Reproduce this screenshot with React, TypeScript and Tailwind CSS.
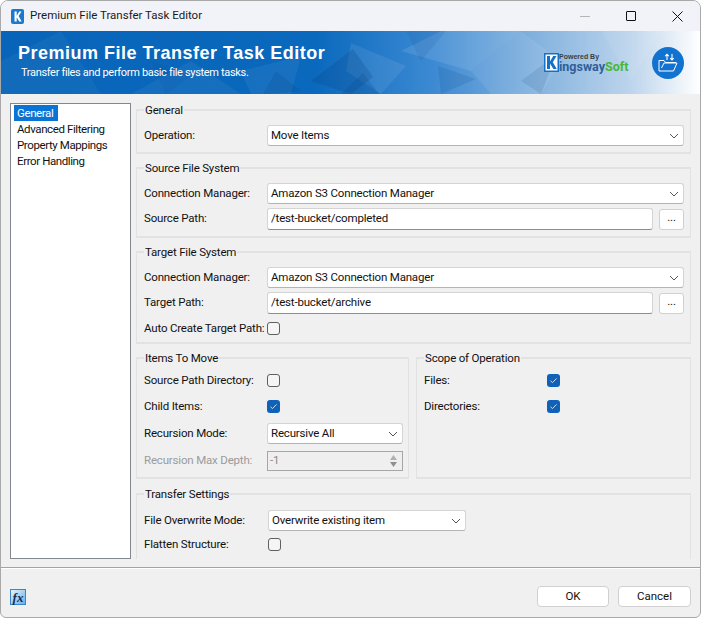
import React from "react";

const font = "font-['Roboto','Liberation_Sans',sans-serif]";

function Chevron() {
  return (
    <svg width="10" height="6" viewBox="0 0 10 6" className="shrink-0">
      <path d="M1 1l4 4 4-4" fill="none" stroke="#555" strokeWidth="1" />
    </svg>
  );
}

function Select({ value, className }: { value: string; className: string }) {
  return (
    <div className={`h-[21px] bg-white rounded-[3px] border border-[#d4d4d4] border-b-[#b4b4b4] flex items-center justify-between pl-[3px] pr-[4px] text-[#111] ${className}`}>
      <span>{value}</span>
      <Chevron />
    </div>
  );
}

function Check({ on = false, className = "" }: { on?: boolean; className?: string }) {
  return on ? (
    <div className={`w-[13px] h-[13px] rounded-[3px] bg-[#0f62b8] flex items-center justify-center shrink-0 ${className}`}>
      <svg width="9" height="7" viewBox="0 0 9 7">
        <path d="M1.5 3.8l2 1.8 4-4.2" fill="none" stroke="#dfe9f5" strokeWidth="0.9" />
      </svg>
    </div>
  ) : (
    <div className={`w-[13px] h-[13px] rounded-[3px] border border-[#5f5f5f] bg-[#f5f5f5] shrink-0 ${className}`} />
  );
}

function Group({ title, className, children }: { title: string; className: string; children: React.ReactNode }) {
  return (
    <fieldset className={`border-2 border-[#e2e2e2] border-x-[1.5px] pl-[7px] shrink-0 ${className}`}>
      <legend className="ml-0 px-[1px] text-[#111] leading-[16px] h-[16px]">{title}</legend>
      {children}
    </fieldset>
  );
}

function Row({ label, className = "", dim = false, children }: { label: string; className?: string; dim?: boolean; children: React.ReactNode }) {
  return (
    <div className={`flex items-center ${className}`}>
      <span className={`w-[123px] shrink-0 whitespace-nowrap ${dim ? "text-[#9b9b9b]" : "text-[#111]"}`}>{label}</span>
      {children}
    </div>
  );
}

function PathInput({ value }: { value: string }) {
  return (
    <div className="flex items-center gap-[6px] flex-1">
      <div className="h-[22px] flex-1 bg-white rounded-[3px] border border-[#d4d4d4] border-b-[#8e8e8e] flex items-center pl-[3px] text-[#111]">{value}</div>
      <div className="w-[25px] h-[21px] bg-white rounded-[3px] border border-[#d0d0d0] flex items-center justify-center text-[#111] leading-none pb-[2px]">...</div>
    </div>
  );
}

function Banner() {
  return (
    <div className="relative h-[63px] shrink-0 overflow-hidden bg-[linear-gradient(90deg,#0864b8_0%,#0a69bd_45%,#3d8ad3_62%,#8ab6e0_78%,#bcd4ec_90%,#ffffff_100%)]">
      <svg className="absolute inset-0" width="701" height="63" viewBox="0 0 701 63">
        <g fill="#ffffff">
          <polygon points="0,30 60,0 100,63 0,63" opacity="0.04" />
          <polygon points="130,63 190,30 240,63" opacity="0.05" />
          <polygon points="240,40 300,25 290,63 250,63" opacity="0.06" />
          <polygon points="350,12 405,35 380,63 345,40" opacity="0.08" />
          <polygon points="400,20 440,0 520,0 470,40" opacity="0.1" />
          <polygon points="470,40 520,0 560,30 540,63 490,63" opacity="0.08" />
          <polygon points="600,0 660,0 630,50" opacity="0.07" />
        </g>
        <g fill="#083f7e">
          <polygon points="340,63 362,42 378,63" opacity="0.18" />
          <polygon points="310,50 352,18 372,46 350,63" opacity="0.22" />
          <polygon points="437,35 475,48 440,63" opacity="0.14" />
          <polygon points="520,50 555,24 540,63" opacity="0.12" />
          <polygon points="275,40 300,60 262,63" opacity="0.16" />
          <polygon points="405,0 445,0 420,30" opacity="0.1" />
          <polygon points="150,30 190,45 165,63" opacity="0.08" />
        </g>
      </svg>
      <div className="relative flex items-center h-full pl-[17px] pr-[16px]">
        <div className="flex-1 min-w-0 flex flex-col">
          <div className="text-white font-bold font-['Liberation_Sans',sans-serif] text-[18px] leading-[22px] tracking-[0.5px] mt-[-2px]">Premium File Transfer Task Editor</div>
          <div className="text-white text-[11px] tracking-[-0.33px] leading-[16px] ml-[3px] mt-[1px]">Transfer files and perform basic file system tasks.</div>
        </div>
        <div className="flex items-center mr-[22px] relative h-[20px] w-[86px] tracking-normal">
          <svg width="15" height="19" viewBox="0 0 15 19" className="absolute left-0 top-0">
            <rect width="15" height="19" fill="#1470c8" />
            <rect x="1.5" y="1.5" width="12" height="16" fill="#fff" />
            <path d="M3 3h3v5.5L9.2 3h3.3L8.8 9.2l4 6.8H9.4L6 10.6V16H3z" fill="#1470c8" />
          </svg>
          <span className="absolute left-[15px] top-[0px] text-[#3b3f46] text-[7px] leading-[7px] font-bold font-['Liberation_Sans',sans-serif] whitespace-nowrap">Powered By</span>
          <span className="absolute left-[15px] top-[7px] text-[#2f5f9a] text-[12.5px] leading-[13px] font-bold whitespace-nowrap">ingsway<span className="text-[#46b835]">Soft</span></span>
        </div>
        <div className="w-[32px] h-[32px] rounded-full bg-[#1173cf] flex items-center justify-center">
          <svg width="20" height="20" viewBox="0 0 20 20" fill="none" stroke="#fff" strokeWidth="1">
            <path d="M1 18V7.5h5l1.5 2H18" />
            <path d="M1 18h14.5L19 10H6L3.5 15" />
            <path d="M9 7V1.5M7.2 3.2L9 1.3l1.8 1.9" strokeWidth="1.1" />
            <path d="M14 1v6M12.2 5.2L14 7l1.8-1.8" strokeWidth="1.1" />
          </svg>
        </div>
      </div>
    </div>
  );
}

function TitleBar() {
  return (
    <div className="h-[30px] shrink-0 bg-[#f2f3f9] flex items-center pl-[10px]">
      <svg width="13" height="15" viewBox="0 0 13 15">
        <rect width="13" height="15" rx="2" fill="#1a78cf" />
        <path d="M3.5 2.5h2.2v4.2l2.6-4.2h2.3L7.6 7l3.1 5.5H8.2L5.7 8.2v4.3H3.5z" fill="#fff" />
      </svg>
      <span className="ml-[6px] text-[#1a1a1a] flex-1 tracking-normal">Premium File Transfer Task Editor</span>
      <div className="w-[46px] flex justify-center"><div className="w-[10px] h-px bg-[#b5b5b5]" /></div>
      <div className="w-[46px] flex justify-center">
        <div className="w-[10px] h-[10px] border border-[#111] rounded-[1px]" />
      </div>
      <div className="w-[46px] flex justify-center">
        <svg width="11" height="11" viewBox="0 0 11 11"><path d="M.5.5l10 10M10.5.5l-10 10" stroke="#111" strokeWidth="1" /></svg>
      </div>
    </div>
  );
}

function Sidebar() {
  return (
    <div className="w-[121px] h-[456px] shrink-0 bg-white border border-[#828790] px-[3px] pt-[1px] text-[#111] leading-[16px] tracking-[-0.4px]">
      <div className="bg-[#0a74d6] text-white w-[44px] pl-[3px]">General</div>
      <div className="px-[3px]">Advanced Filtering</div>
      <div className="px-[3px]">Property Mappings</div>
      <div className="px-[3px]">Error Handling</div>
    </div>
  );
}

function NumberBox() {
  return (
    <div className="flex-1 h-[20px] border border-[#a6a6a6] bg-[#efefef] flex items-center justify-between px-[2px] text-[#8c8c8c]">
      <span>-1</span>
      <div className="flex flex-col gap-[2px] mr-[1px] w-[11px] items-center">
        <svg width="7" height="5" viewBox="0 0 7 5"><path d="M3.5 0L7 5H0z" fill="#b0b0b0" /></svg>
        <svg width="7" height="5" viewBox="0 0 7 5"><path d="M3.5 5L7 0H0z" fill="#8f8f8f" /></svg>
      </div>
    </div>
  );
}

function Form() {
  return (
    <div className="flex-1 min-w-0 h-[456px] overflow-hidden tracking-[-0.18px]">
      <div className="flex flex-col mt-[-1px]">
        <Group title="General" className="h-[52px] pr-[6px]">
          <Row label="Operation:" className="mt-[7px]"><Select value="Move Items" className="flex-1" /></Row>
        </Group>
        <Group title="Source File System" className="h-[78px] mt-[6px] pr-[6px]">
          <Row label="Connection Manager:" className="mt-[7px]"><Select value="Amazon S3 Connection Manager" className="flex-1" /></Row>
          <Row label="Source Path:" className="mt-[4px]"><PathInput value="/test-bucket/completed" /></Row>
        </Group>
        <Group title="Target File System" className="h-[100px] mt-[6px] pr-[6px]">
          <Row label="Connection Manager:" className="mt-[7px]"><Select value="Amazon S3 Connection Manager" className="flex-1" /></Row>
          <Row label="Target Path:" className="mt-[4px]"><PathInput value="/test-bucket/archive" /></Row>
          <Row label="Auto Create Target Path:" className="mt-[8px] h-[13px]"><Check /></Row>
        </Group>
        <div className="flex gap-[7px] mt-[6px] h-[129px] shrink-0">
          <Group title="Items To Move" className="w-[273px] pr-[5px]">
            <Row label="Source Path Directory:" className="mt-[8px] h-[13px]"><Check /></Row>
            <Row label="Child Items:" className="mt-[13px] h-[13px]"><Check on /></Row>
            <Row label="Recursion Mode:" className="mt-[10px]"><Select value="Recursive All" className="flex-1" /></Row>
            <Row label="Recursion Max Depth:" dim className="mt-[7px]"><NumberBox /></Row>
          </Group>
          <Group title="Scope of Operation" className="flex-1 pr-[6px]">
            <Row label="Files:" className="mt-[8px] h-[13px]"><Check on /></Row>
            <Row label="Directories:" className="mt-[13px] h-[13px]"><Check on /></Row>
          </Group>
        </div>
        <Group title="Transfer Settings" className="h-[90px] mt-[7px] pr-[6px]">
          <Row label="File Overwrite Mode:" className="mt-[8px]"><Select value="Overwrite existing item" className="w-[198px] ml-[1px]" /></Row>
          <Row label="Flatten Structure:" className="mt-[7px] h-[13px]"><Check className="ml-[1px]" /></Row>
        </Group>
      </div>
    </div>
  );
}

function Footer() {
  return (
    <div className="flex-1 border-t border-[#a3a3a3] shadow-[inset_0_1px_0_#ffffff] flex items-end pl-[9px] pr-[9px] pb-[10px]">
      <div className="w-[16px] h-[16px] mb-[2px] border border-[#3a86c8] bg-[linear-gradient(135deg,#e8f3fb,#5fb2ee)] flex items-center justify-center">
        <span className="font-['Liberation_Serif',serif] italic font-bold text-[13px] leading-none text-[#1b2a4a]">fx</span>
      </div>
      <div className="flex-1" />
      <div className="w-[72px] h-[21px] bg-white rounded-[4px] border border-[#d0d0d0] flex items-center justify-center text-[#111]">OK</div>
      <div className="w-[73px] h-[21px] bg-white rounded-[4px] border border-[#d0d0d0] flex items-center justify-center text-[#111] ml-[9px]">Cancel</div>
    </div>
  );
}

export default function App() {
  return (
    <div className={`${font} w-[701px] h-[618px] bg-[#f0f0f0] text-[11.5px] border border-[#a9a9a9] rounded-t-[8px] rounded-b-[6px] overflow-hidden flex flex-col`}>
      <TitleBar />
      <Banner />
      <div className="flex gap-[5px] pl-[9px] pr-[9px] pt-[9px] pb-[8px] shrink-0">
        <Sidebar />
        <Form />
      </div>
      <Footer />
    </div>
  );
}
